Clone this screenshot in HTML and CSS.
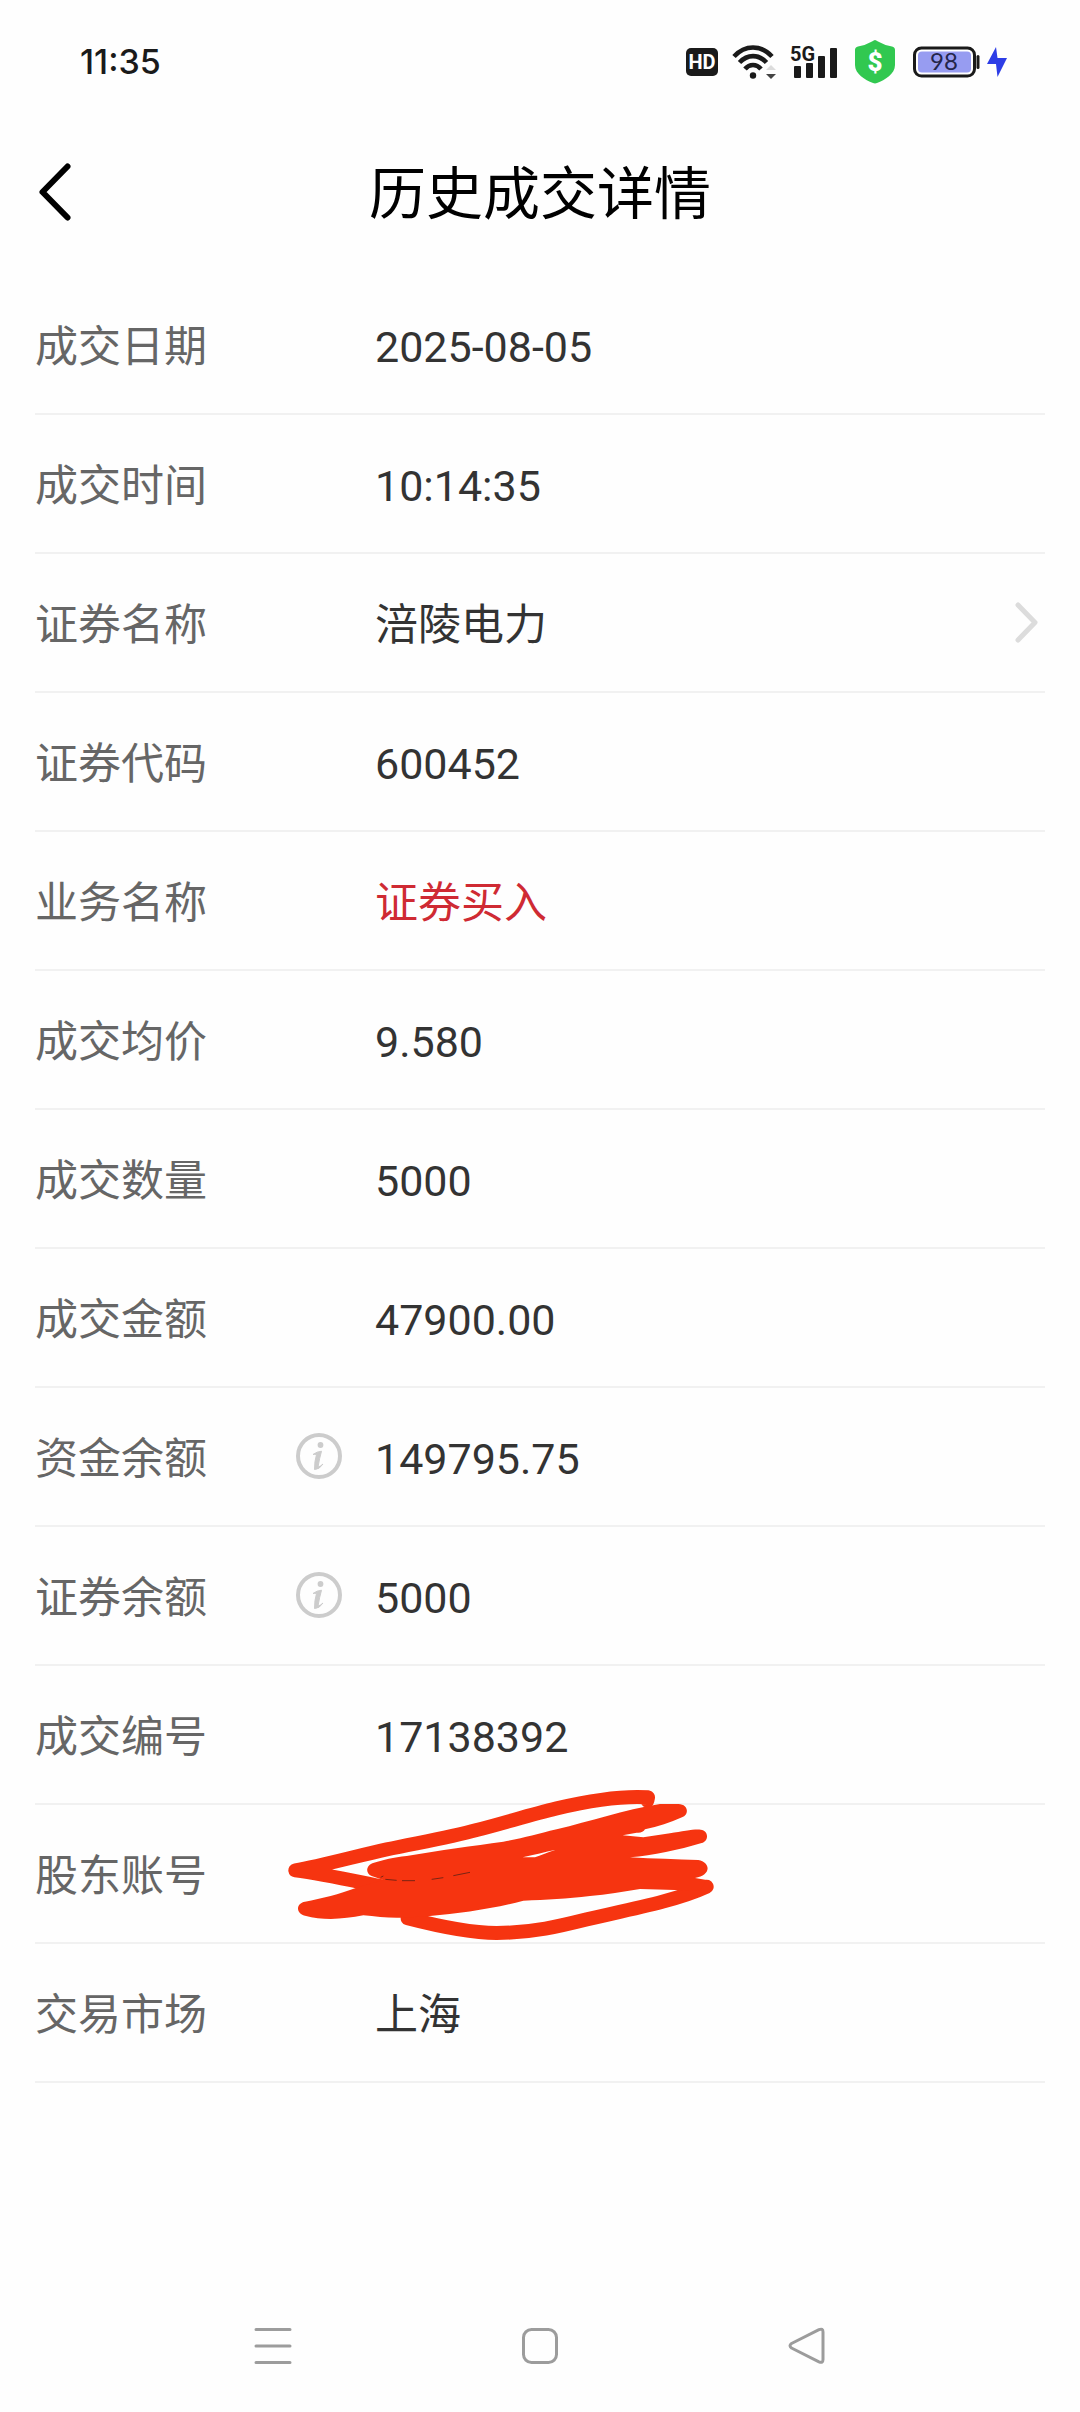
FILE: index.html
```html
<!DOCTYPE html>
<html lang="zh-CN">
<head>
<meta charset="utf-8">
<meta name="viewport" content="width=device-width, initial-scale=1">
<title>历史成交详情</title>
<link rel="stylesheet" href="styles.css">
</head>
<body>
<div class="status-bar">
  <time class="clock">11:35</time>
  <div class="status-icons">
    <svg width="32" height="28" viewBox="0 0 32 28" role="img" aria-label="HD">
      <rect width="32" height="28" rx="5" fill="#1a1a1a"/>
      <text class="hd-text" x="16" y="21" text-anchor="middle">HD</text>
    </svg>
    <svg width="44" height="34" viewBox="0 0 44 34" role="img" aria-label="Wi-Fi">
      <g fill="none" stroke="#1a1a1a" stroke-width="4.6">
        <path d="M2 11.500C13-.5 29-.5 40 11.500"/>
        <path d="M7.500 17.500C15.500 9 26.500 9 34.500 17.500"/>
        <path d="M13 24C17.500 18.700 24.500 18.700 29 24"/>
      </g>
      <circle cx="21" cy="30.500" r="3.200" fill="#1a1a1a"/>
      <path d="M34 25l5-5 5 5z" fill="#dcdcdc"/>
      <path d="M34 29h10l-5 5z" fill="#444"/>
    </svg>
    <svg width="51" height="34" viewBox="0 0 51 34" role="img" aria-label="5G">
      <g fill="#1a1a1a">
        <rect x="4" y="21" width="7" height="12" rx="1"/>
        <rect x="16" y="18" width="7" height="15" rx="1"/>
        <rect x="28" y="11" width="7" height="22" rx="1"/>
        <rect x="40" y="3" width="7" height="30" rx="1"/>
      </g>
      <text class="net-text" x="0" y="16">5G</text>
    </svg>
    <svg width="44" height="44" viewBox="0 0 44 44" role="img" aria-label="支付保护">
      <path d="M20 0Q21 0 23 1.500Q30 5.500 37 6.500Q40 7 40 10V25C40 34 30 40 22 43Q20 43.800 18 43C10 40 0 34 0 25V10Q0 7 3 6.500Q10 5.500 17 1.500Q19 0 20 0z" fill="#31c850"/>
      <text class="shield-text" x="20" y="31" text-anchor="middle">$</text>
    </svg>
    <svg width="94" height="34" viewBox="0 0 94 34" role="img" aria-label="电量 98%">
      <rect x="1.500" y="3" width="60" height="28" rx="7" fill="#fff" stroke="#1a1a1a" stroke-width="3"/>
      <rect x="5" y="6.500" width="53" height="21" rx="4" fill="#979cf1"/>
      <path d="M65 11.500V22.500" stroke="#1a1a1a" stroke-width="3" stroke-linecap="round"/>
      <text class="battery-text" x="31" y="25" text-anchor="middle">98</text>
      <path d="M83 2L74 19H83L84.500 32L94 13H84.500z" fill="#2d3de6"/>
    </svg>
  </div>
</div>

<header class="header">
  <button class="back" type="button" aria-label="返回">
    <svg width="32" height="58" viewBox="0 0 32 58"><path d="M28.500 3.500L3.500 29L28.500 54.500" fill="none" stroke="#000" stroke-width="6" stroke-linecap="round" stroke-linejoin="round"/></svg>
  </button>
  <h1 class="title">历史成交详情</h1>
</header>

<main class="content">
  <svg class="symbols" aria-hidden="true">
    <symbol id="info" viewBox="0 0 46 46">
      <circle cx="23" cy="23" r="21" fill="none" stroke="#ccc" stroke-width="4"/>
      <circle cx="24.500" cy="12" r="2.900" fill="#ccc"/>
      <path d="M17 21.500Q21 18.500 25.500 18.200Q23.500 25 22 34Q24.500 33.500 27 31Q23.500 36.500 18.500 36.500Q18.500 28 20.500 21.500Q19 21 17 21.500z" fill="#ccc" stroke="#ccc" stroke-linejoin="round"/>
    </symbol>
  </svg>
  <dl class="details">
    <div class="row"><dt>成交日期</dt><dd>2025-08-05</dd></div>
    <div class="row"><dt>成交时间</dt><dd>10:14:35</dd></div>
    <div class="row"><dt>证券名称</dt><dd><a class="stock" href="#stock">涪陵电力
      <svg width="23" height="41" viewBox="0 0 23 41" aria-hidden="true"><path d="M3 3L20 20.500L3 38" fill="none" stroke="#dcdcdc" stroke-width="5" stroke-linecap="round" stroke-linejoin="round"/></svg></a></dd></div>
    <div class="row"><dt>证券代码</dt><dd>600452</dd></div>
    <div class="row"><dt>业务名称</dt><dd class="buy">证券买入</dd></div>
    <div class="row"><dt>成交均价</dt><dd>9.580</dd></div>
    <div class="row"><dt>成交数量</dt><dd>5000</dd></div>
    <div class="row"><dt>成交金额</dt><dd>47900.00</dd></div>
    <div class="row"><dt>资金余额<button class="info" type="button" aria-label="资金余额说明"><svg width="46" height="46"><use href="#info"/></svg></button></dt><dd>149795.75</dd></div>
    <div class="row"><dt>证券余额<button class="info" type="button" aria-label="证券余额说明"><svg width="46" height="46"><use href="#info"/></svg></button></dt><dd>5000</dd></div>
    <div class="row"><dt>成交编号</dt><dd>17138392</dd></div>
    <div class="row"><dt>股东账号</dt><dd class="masked">
      <svg class="scribble" width="460" height="190" viewBox="0 0 1380 570" role="img" aria-label="已涂抹">
        <g fill="none" stroke="#f63410" stroke-width="42" stroke-linecap="round" stroke-linejoin="round">
          <path d="M1132 92L1134 82C1050 76 950 94 860 115C780 134 700 160 620 180C540 202 450 217 350 238C260 258 150 288 76 301C160 312 240 330 340 350"/>
          <path d="M1310 350C1220 392 1080 418 950 448C870 468 790 488 680 489C590 489 490 465 413 445"/>
        </g>
        <path fill="#f63410" fill-rule="evenodd" d="M312 278C340 270 370 262 410 258C510 240 610 228 700 215C760 205 800 192 860 178C960 154 1060 120 1170 102H1225C1256 103 1258 134 1236 142C1200 158 1165 170 1125 178Q1118 190 1100 188L1058 196L1120 202L1200 190C1240 184 1270 177 1292 179C1318 182 1316 214 1295 219C1225 240 1150 256 1080 262C1150 266 1220 268 1285 270C1325 278 1322 318 1275 324L1310 330L1290 362L1215 360L1110 357C1060 365 1010 374 960 378C890 387 830 389 760 392C670 416 570 430 480 438L400 443C360 445 320 440 280 436C220 448 160 452 105 437C76 430 78 399 105 395C155 386 210 372 255 355L340 330L305 318C286 312 286 285 312 278zM758 262C795 254 825 246 855 240C830 248 812 256 795 262z"/>
        <path d="M332 322L340 318M346 328L380 331M396 332H435M485 328L520 323M550 317L600 307" fill="none" stroke="#7a2414" stroke-width="3"/>
      </svg></dd></div>
    <div class="row"><dt>交易市场</dt><dd>上海</dd></div>
  </dl>
</main>

<nav class="nav-bar" aria-label="系统导航">
  <button type="button" aria-label="最近任务"><svg width="36" height="38" viewBox="0 0 36 38"><path d="M1 2.500H35M1 19H35M1 35.500H35" fill="none" stroke="#9c9c9c" stroke-width="3" stroke-linecap="round"/></svg></button>
  <button type="button" aria-label="主屏幕"><svg width="36" height="38" viewBox="0 0 36 38"><rect x="1.500" y="2.500" width="33" height="33" rx="8" fill="none" stroke="#9c9c9c" stroke-width="3"/></svg></button>
  <button type="button" aria-label="返回上一级"><svg width="36" height="38" viewBox="0 0 36 38"><path d="M2.500 16.500L30 2.700Q34 1 34 5V32.500Q34 36.500 30 34.800L2.500 21Q-.5 18.700 2.500 16.500z" fill="none" stroke="#9c9c9c" stroke-width="3" stroke-linejoin="round"/></svg></button>
</nav>
</body>
</html>
```
FILE: styles.css
```css
* {
  box-sizing: border-box;
}

body {
  display: flex;
  flex-direction: column;
  min-height: 100vh;
  margin: 0;
  background: #fefefe;
  color: #333;
  font-family: Roboto, "Noto Sans CJK SC", sans-serif;
}

button {
  display: flex;
  padding: 0;
  border: 0;
  background: none;
}

svg {
  display: block;
  flex: none;
  overflow: visible;
}

.status-bar {
  display: flex;
  align-items: center;
  justify-content: space-between;
  height: 124px;
  padding: 0 73px 0 80px;
}

.clock {
  color: #1a1a1a;
  font: 500 34px/48px Inter, sans-serif;
}

.status-icons {
  display: flex;
  align-items: center;
  gap: 14px;
}

.hd-text {
  fill: #fff;
  font: 700 20px "Liberation Sans Narrow", Roboto, sans-serif;
}

.net-text {
  fill: #1a1a1a;
  font: 700 20px "Liberation Sans Narrow", Roboto, sans-serif;
}

.shield-text {
  fill: #fff;
  font: 900 26px Roboto, sans-serif;
}

.battery-text {
  fill: #24264a;
  font: 400 24px Lato, sans-serif;
}

.header {
  display: grid;
  grid-template-columns: 1fr auto 1fr;
  align-items: center;
  height: 136px;
  padding: 0 39px;
}

.title {
  margin: 0;
  padding-top: 5px;
  color: #000;
  font-size: 57px;
  font-weight: 400;
  line-height: 80px;
}

.content {
  padding: 16px 35px 0;
}

.symbols {
  position: absolute;
  width: 0;
  height: 0;
}

.details {
  margin: 0;
  font-size: 43px;
  line-height: 60px;
}

.row {
  display: flex;
  align-items: center;
  height: 139px;
  padding-top: 4px;
  border-bottom: 2px solid #f1f1f1;
}

.row dt {
  display: flex;
  align-items: center;
  justify-content: space-between;
  width: 340px;
  padding-right: 33px;
  color: #666;
}

.row dd {
  flex: 1;
  margin: 0;
}

.row .buy {
  color: #cf2a33;
}

.info,
.stock svg {
  margin-bottom: 5px;
}

.stock {
  display: flex;
  align-items: center;
  justify-content: space-between;
  padding-right: 7px;
  color: inherit;
  text-decoration: none;
}

.masked {
  position: relative;
  height: 60px;
}

/* The marker stroke runs past the row's edges. */
.scribble {
  position: absolute;
  top: -76px;
  left: -105px;
}

.nav-bar {
  display: grid;
  grid-template-columns: repeat(3, 1fr);
  align-items: center;
  justify-items: center;
  height: 132px;
  margin-top: auto;
  padding: 0 140px;
}
```
